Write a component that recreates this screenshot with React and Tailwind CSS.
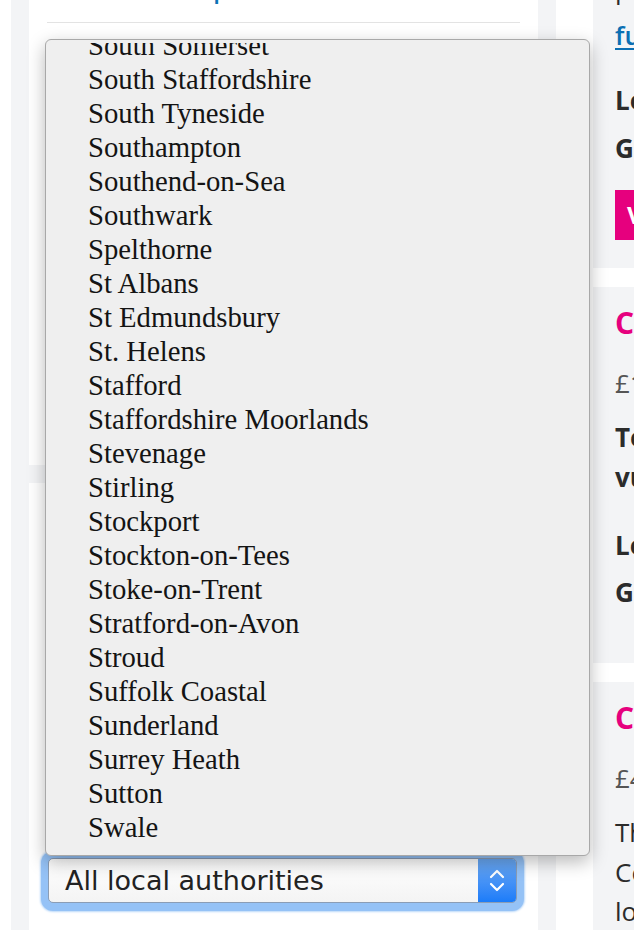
const AUTHORITIES = [
  'South Somerset',
  'South Staffordshire',
  'South Tyneside',
  'Southampton',
  'Southend-on-Sea',
  'Southwark',
  'Spelthorne',
  'St Albans',
  'St Edmundsbury',
  'St. Helens',
  'Stafford',
  'Staffordshire Moorlands',
  'Stevenage',
  'Stirling',
  'Stockport',
  'Stockton-on-Tees',
  'Stoke-on-Trent',
  'Stratford-on-Avon',
  'Stroud',
  'Suffolk Coastal',
  'Sunderland',
  'Surrey Heath',
  'Sutton',
  'Swale',
]

const sans = "font-['Open_Sans',sans-serif]"

function GrantCard({ title, amount, lines, bold, labels, className }) {
  return (
    <div className={`bg-[#f3f4f6] pl-[22px] pt-[16px] ${className}`}>
      <p className="text-[30px] leading-[40px] font-bold text-[#e6007e] whitespace-nowrap">{title}</p>
      <p className="mt-[20px] text-[26px] leading-[40px] text-[#555] whitespace-nowrap">{amount}</p>
      <div className={`mt-[14px] text-[26px] text-[#2b2b2b] whitespace-nowrap ${bold ? 'font-bold' : ''}`}>
        {lines.map((l, i) => (
          <p key={i} className={i === 2 ? 'leading-[38px]' : 'leading-[40px]'}>{l}</p>
        ))}
      </div>
      {labels && (
        <div className="text-[26px] leading-[40px] font-bold text-[#2b2b2b] whitespace-nowrap">
          <p className="mt-[28px]">Local authority: Stafford</p>
          <p className="mt-[7px]">Grant type: Revenue</p>
        </div>
      )}
    </div>
  )
}

export default function App() {
  return (
    <div className={`relative w-[634px] h-[930px] overflow-hidden bg-white flex ${sans}`}>
      {/* left column */}
      <div className="ml-[11px] w-[545px] shrink-0 bg-[#f3f4f6] px-[18px] flex flex-col gap-[18px]">
        <div className="h-[465px] bg-white px-[18px]">
          <p className="-mt-[27px] pl-[67px] text-[24px] leading-[32px] font-semibold text-[#0b72b5] whitespace-nowrap">
            Search options
          </p>
          <div className="mt-[17px] h-px bg-[#e3e3e3]" />
        </div>
        <div className="flex-1 bg-white pl-[12px] pt-[368px]">
          <div className="w-[483px] rounded-[12px] bg-[#95c2f6] px-[7px] pt-[7px] pb-[8px] shadow-[0_0_2px_1px_#bcd9f9]">
            <div className="relative flex h-[45px] items-center rounded-[5px] border border-[#8b9db5] bg-gradient-to-b from-white to-[#f4f4f4]">
              <span className="pl-[16px] pt-[2px] text-[27px] text-[#222] font-['DejaVu_Sans',sans-serif]">
                All local authorities
              </span>
              <div className="absolute right-0 top-0 bottom-0 w-[38px] rounded-r-[4px] bg-gradient-to-b from-[#6aa8f2] to-[#1a7cf9] flex flex-col items-center justify-center gap-[3px]">
                <svg width="16" height="10" viewBox="0 0 16 10" fill="none" stroke="white" strokeWidth="2.2" strokeLinecap="round" strokeLinejoin="round">
                  <path d="M2 8 L8 2 L14 8" />
                </svg>
                <svg width="16" height="10" viewBox="0 0 16 10" fill="none" stroke="white" strokeWidth="2.2" strokeLinecap="round" strokeLinejoin="round">
                  <path d="M2 2 L8 8 L14 2" />
                </svg>
              </div>
            </div>
          </div>
        </div>
      </div>

      {/* right column */}
      <div className="ml-[37px] w-[420px] shrink-0 flex flex-col gap-[19px]">
        <div className="h-[268px] shrink-0 bg-[#f3f4f6] pl-[22px]">
          <div className="-mt-[31px] text-[26px] leading-[40px] text-[#2b2b2b] whitespace-nowrap">
            <p>projects across the UK. See the</p>
            <p className="mt-[6px]">
              <a className="font-semibold text-[#0b6fb3] underline underline-offset-[3px]">full details</a>
            </p>
          </div>
          <div className="text-[26px] leading-[40px] font-bold text-[#2b2b2b] whitespace-nowrap">
            <p className="mt-[25px]">Local authority: All</p>
            <p className="mt-[8px]">Grant type: Capital</p>
          </div>
          <div className="mt-[22px] h-[50px] bg-[#e6007e] pl-[12px] flex items-center text-[24px] font-bold text-white whitespace-nowrap">
            View grant details
          </div>
        </div>
        <GrantCard
          className="h-[376px] shrink-0"
          title="Community Fund"
          amount="£1,000 - £10,000"
          bold
          lines={['To support projects helping', 'vulnerable people']}
          labels
        />
        <GrantCard
          className="flex-1"
          title="Community Grants"
          amount="£400 - £5,000"
          lines={['The fund supports voluntary and', 'Community groups working in', 'local areas']}
        />
      </div>

      {/* open select menu */}
      <div className="absolute left-[45px] top-[39px] w-[545px] h-[817px] rounded-[6px] border border-[#a8a8a8] bg-[#efefef] shadow-[0_6px_18px_rgba(0,0,0,0.28)] pt-[3px]">
        <div className="h-full overflow-hidden">
          <ul className="-mt-[15px] pl-[42px] font-['Liberation_Serif',serif] text-[28.7px] leading-[34px] text-[#141414]">
            {AUTHORITIES.map((a) => (
              <li key={a} className="whitespace-nowrap">{a}</li>
            ))}
          </ul>
        </div>
      </div>
    </div>
  )
}
